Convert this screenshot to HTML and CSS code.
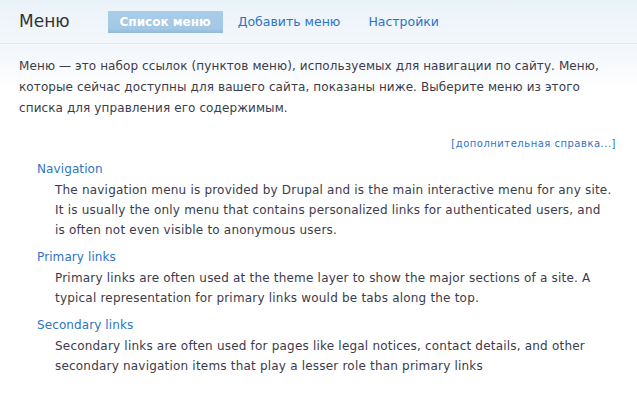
FILE: index.html
```html
<!DOCTYPE html>
<html lang="ru">
<head>
    <meta charset="UTF-8">
    <title>Меню</title>
    <link rel="stylesheet" href="styles.css">
</head>
<body>
    <div class="header">
        <h1>Меню</h1>
        <ul class="tabs">
            <li class="active"><a href="#">Список меню</a></li>
            <li><a href="#">Добавить меню</a></li>
            <li><a href="#">Настройки</a></li>
        </ul>
    </div>
    <div class="content">
        <p class="intro">Меню — это набор ссылок (пунктов меню), используемых для навигации по сайту. Меню, которые сейчас доступны для вашего сайта, показаны ниже. Выберите меню из этого списка для управления его содержимым.</p>
        <div class="more-help"><a href="#">[дополнительная справка...]</a></div>
        <dl class="menu-list">
            <dt><a href="#">Navigation</a></dt>
            <dd>The navigation menu is provided by Drupal and is the main interactive menu for any site. It is usually the only menu that contains personalized links for authenticated users, and is often not even visible to anonymous users.</dd>
            <dt><a href="#">Primary links</a></dt>
            <dd>Primary links are often used at the theme layer to show the major sections of a site. A typical representation for primary links would be tabs along the top.</dd>
            <dt><a href="#">Secondary links</a></dt>
            <dd>Secondary links are often used for pages like legal notices, contact details, and other secondary navigation items that play a lesser role than primary links</dd>
        </dl>
    </div>
</body>
</html>
```

FILE: styles.css
```css
body {
    margin: 0;
    font-family: "DejaVu Sans", Verdana, sans-serif;
    font-size: 12px;
    letter-spacing: 0.1px;
    color: #3b3b4b;
    background: linear-gradient(#eaf2f9 0, #f6f9fc 60px, #fff 90px) no-repeat #fff;
}
a {
    color: #2f73c7;
    text-decoration: none;
}
.header {
    display: flex;
    align-items: center;
    height: 43px;
    padding: 0 19px;
    border-bottom: 1px solid #e2e8ee;
}
.header h1 {
    margin: 0 38px 2px 0;
    font-size: 17px;
    font-weight: normal;
    letter-spacing: 0;
    color: #333;
}
.tabs {
    display: flex;
    margin: 0;
    padding: 0;
    list-style: none;
}
.tabs li a {
    display: block;
    font-size: 12.5px;
    letter-spacing: 0;
    padding: 0 14px;
    line-height: 22px;
}
.tabs li.active a {
    background: linear-gradient(#a9cde8, #a3c8e6 80%, #8fbadc);
    color: #fff;
    font-size: 12px;
    font-weight: bold;
    padding: 0 12px;
    margin-right: 1px;
}
.content {
    padding: 0 19px;
}
.intro {
    margin: 12px 0 0;
    line-height: 21px;
}
.more-help {
    text-align: right;
    font-size: 10px;
    letter-spacing: 0.5px;
    margin: 19px 2px 0 0;
}
.menu-list {
    margin: 10px 0 0 18px;
}
.menu-list dt {
    line-height: 20px;
    margin-top: 7px;
}
.menu-list dd {
    margin: 1px 6px 0 18px;
    line-height: 20px;
    letter-spacing: 0.2px;
}
```
